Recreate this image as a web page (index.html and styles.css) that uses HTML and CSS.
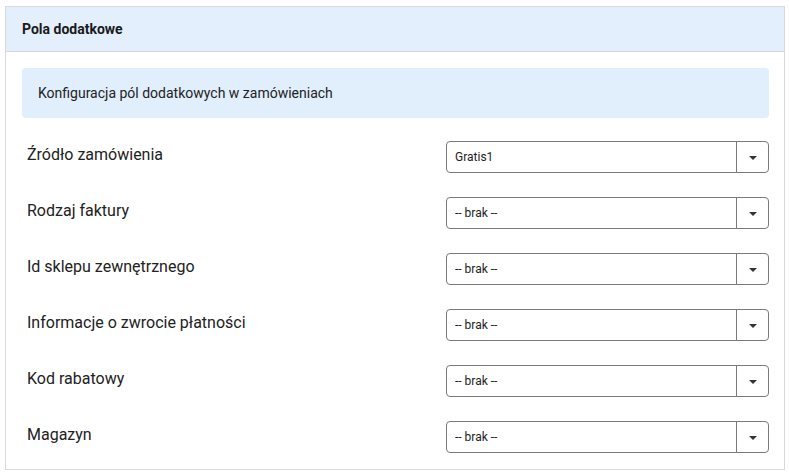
FILE: index.html
```html
<!DOCTYPE html>
<html lang="pl">
<head>
<meta charset="utf-8">
<link rel="stylesheet" href="styles.css">
</head>
<body>
<div class="card">
  <div class="card-header">Pola dodatkowe</div>
  <div class="card-body">
    <div class="info">Konfiguracja pól dodatkowych w zamówieniach</div>
    <div class="rows">
      <div class="row"><div class="label">Źródło zamówienia</div><div class="select"><span class="value">Gratis1</span><span class="arrow"><i></i></span></div></div>
      <div class="row"><div class="label">Rodzaj faktury</div><div class="select"><span class="value">-- brak --</span><span class="arrow"><i></i></span></div></div>
      <div class="row"><div class="label">Id sklepu zewnętrznego</div><div class="select"><span class="value">-- brak --</span><span class="arrow"><i></i></span></div></div>
      <div class="row"><div class="label">Informacje o zwrocie płatności</div><div class="select"><span class="value">-- brak --</span><span class="arrow"><i></i></span></div></div>
      <div class="row"><div class="label">Kod rabatowy</div><div class="select"><span class="value">-- brak --</span><span class="arrow"><i></i></span></div></div>
      <div class="row"><div class="label">Magazyn</div><div class="select"><span class="value">-- brak --</span><span class="arrow"><i></i></span></div></div>
    </div>
  </div>
</div>
</body>
</html>
```
FILE: styles.css
```css
html, body { margin: 0; padding: 0; background: #fff; }
body {
  font-family: Roboto, "Noto Sans", sans-serif;
  color: #212121;
  padding: 6px 4px 0 5px;
}
.card {
  border: 1px solid #d9d9d9;
  height: 464px;
  box-sizing: border-box;
}
.card-header {
  background: #e3effd;
  border-bottom: 1px solid #d9d9d9;
  height: 44px;
  display: flex;
  align-items: center;
  padding-left: 16px;
  font-size: 14px;
  font-weight: 700;
  color: #1a1a1a;
}
.card-body {
  padding: 16px 15px 0 16px;
}
.info {
  background: #e1eefc;
  border-radius: 4px;
  height: 50px;
  display: flex;
  align-items: center;
  padding-left: 16px;
  font-size: 14px;
  color: #222;
}
.rows {
  padding-top: 11px;
}
.row {
  height: 56px;
  display: grid;
  grid-template-columns: 1fr 323px;
  align-items: center;
  padding-left: 5px;
}
.label {
  font-size: 16px;
  color: #222;
  margin-top: -6px;
}
.select {
  height: 32px;
  box-sizing: border-box;
  border: 1px solid #7a7a7a;
  border-radius: 4px;
  display: flex;
  align-items: stretch;
  font-size: 12px;
  color: #222;
}
.value {
  flex: 1;
  display: flex;
  align-items: center;
  padding-left: 8px;
}
.arrow {
  width: 31px;
  border-left: 1px solid #7a7a7a;
  display: flex;
  align-items: center;
  justify-content: center;
}
.arrow i {
  width: 0;
  height: 0;
  border-left: 4px solid transparent;
  border-right: 4px solid transparent;
  border-top: 4px solid #333;
  margin-top: 1px;
}
```
